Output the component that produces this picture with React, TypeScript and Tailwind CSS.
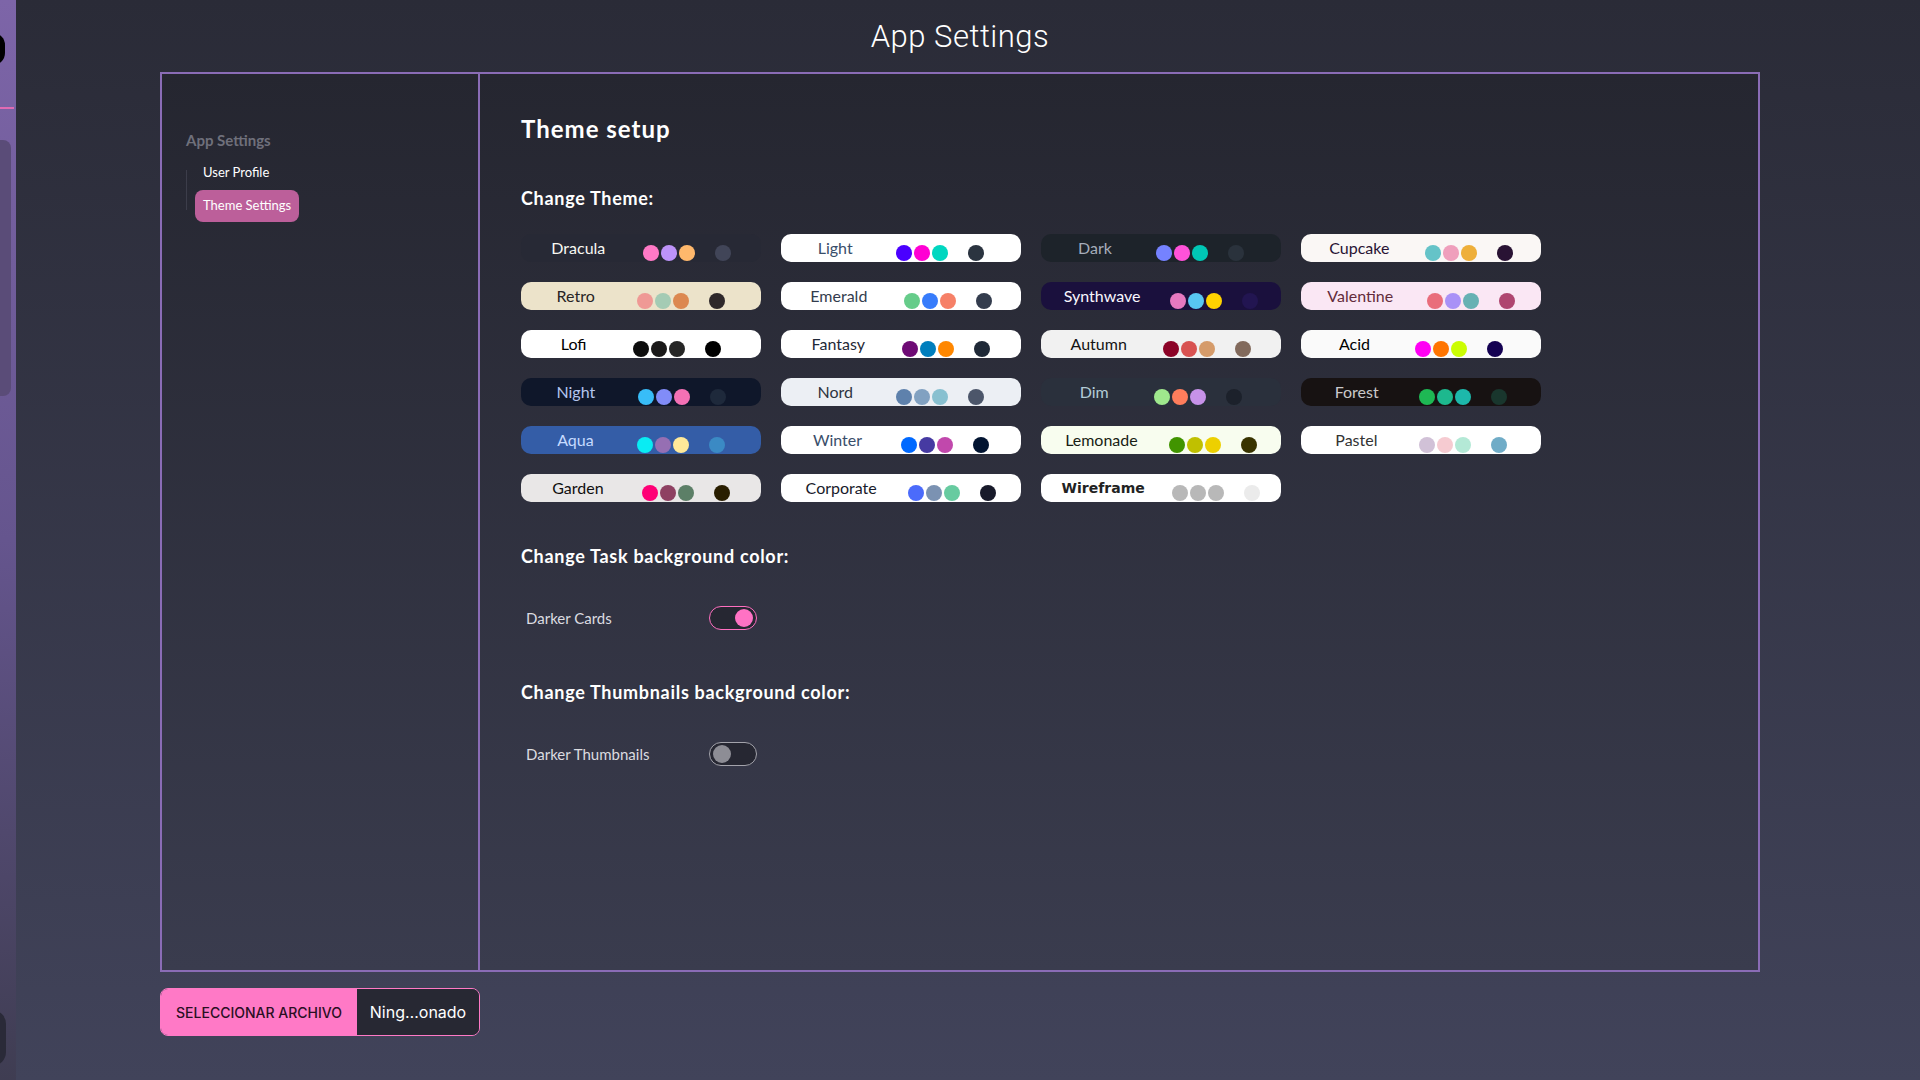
import React from 'react';

type Theme = {
  name: string;
  bg: string;
  text: string;
  dots: [string, string, string];
  neutral: string;
  font?: string;
};

const themes: Theme[] = [
  { name: 'Dracula', bg: 'bg-[#272935]', text: 'text-[#f8f8f2]', dots: ['bg-[#ff79c6]', 'bg-[#bd93f9]', 'bg-[#ffb86c]'], neutral: 'bg-[#414558]' },
  { name: 'Light', bg: 'bg-white', text: 'text-[#394e6a]', dots: ['bg-[#4a00ff]', 'bg-[#ff00d3]', 'bg-[#00d7c0]'], neutral: 'bg-[#2b3440]' },
  { name: 'Dark', bg: 'bg-[#1d232a]', text: 'text-[#a6adba]', dots: ['bg-[#7582ff]', 'bg-[#ff52d9]', 'bg-[#00c7b5]'], neutral: 'bg-[#2a323c]' },
  { name: 'Cupcake', bg: 'bg-[#faf7f5]', text: 'text-[#291334]', dots: ['bg-[#65c3c8]', 'bg-[#ef9fbc]', 'bg-[#eeaf3a]'], neutral: 'bg-[#291334]' },

  { name: 'Retro', bg: 'bg-[#ece3ca]', text: 'text-[#282425]', dots: ['bg-[#ef9995]', 'bg-[#a4cbb4]', 'bg-[#dc8850]'], neutral: 'bg-[#2e282a]' },
  { name: 'Emerald', bg: 'bg-white', text: 'text-[#333c4d]', dots: ['bg-[#66cc8a]', 'bg-[#377cfb]', 'bg-[#f68067]'], neutral: 'bg-[#333c4d]' },
  { name: 'Synthwave', bg: 'bg-[#1a103d]', text: 'text-[#f9f7fd]', dots: ['bg-[#e779c1]', 'bg-[#58c7f3]', 'bg-[#ffd200]'], neutral: 'bg-[#221551]' },
  { name: 'Valentine', bg: 'bg-[#fae7f4]', text: 'text-[#632c3b]', dots: ['bg-[#e96d7b]', 'bg-[#a991f7]', 'bg-[#66b1b3]'], neutral: 'bg-[#af4670]' },

  { name: 'Lofi', bg: 'bg-white', text: 'text-[#000000]', dots: ['bg-[#0d0d0d]', 'bg-[#1a1919]', 'bg-[#262626]'], neutral: 'bg-[#000000]' },
  { name: 'Fantasy', bg: 'bg-white', text: 'text-[#1f2937]', dots: ['bg-[#6e0b75]', 'bg-[#007ebd]', 'bg-[#ff8700]'], neutral: 'bg-[#1f2937]' },
  { name: 'Autumn', bg: 'bg-[#f1f1f1]', text: 'text-[#141414]', dots: ['bg-[#8c0327]', 'bg-[#d85251]', 'bg-[#d59b6a]'], neutral: 'bg-[#826a5c]' },
  { name: 'Acid', bg: 'bg-[#fafafa]', text: 'text-[#000000]', dots: ['bg-[#ff00f4]', 'bg-[#ff7400]', 'bg-[#cbfd03]'], neutral: 'bg-[#140152]' },

  { name: 'Night', bg: 'bg-[#0f172a]', text: 'text-[#b3c5ef]', dots: ['bg-[#38bdf8]', 'bg-[#818cf8]', 'bg-[#f471b5]'], neutral: 'bg-[#1e293b]' },
  { name: 'Nord', bg: 'bg-[#eceff4]', text: 'text-[#2e3440]', dots: ['bg-[#5e81ac]', 'bg-[#81a1c1]', 'bg-[#88c0d0]'], neutral: 'bg-[#4c566a]' },
  { name: 'Dim', bg: 'bg-[#2a303c]', text: 'text-[#b2ccd6]', dots: ['bg-[#9fe88d]', 'bg-[#ff7d5c]', 'bg-[#c792e9]'], neutral: 'bg-[#1c212b]' },
  { name: 'Forest', bg: 'bg-[#171212]', text: 'text-[#cac9c9]', dots: ['bg-[#1eb854]', 'bg-[#1db88e]', 'bg-[#1db8ab]'], neutral: 'bg-[#19362d]' },

  { name: 'Aqua', bg: 'bg-[#345da7]', text: 'text-[#c6dbff]', dots: ['bg-[#09ecf3]', 'bg-[#966fb3]', 'bg-[#ffe999]'], neutral: 'bg-[#3b8ac4]' },
  { name: 'Winter', bg: 'bg-white', text: 'text-[#394e6a]', dots: ['bg-[#0069ff]', 'bg-[#463aa2]', 'bg-[#c148ac]'], neutral: 'bg-[#021431]' },
  { name: 'Lemonade', bg: 'bg-[#f8fdef]', text: 'text-[#191e15]', dots: ['bg-[#419400]', 'bg-[#c0c000]', 'bg-[#edd000]'], neutral: 'bg-[#393400]' },
  { name: 'Pastel', bg: 'bg-white', text: 'text-[#333333]', dots: ['bg-[#d1c1d7]', 'bg-[#f6cbd1]', 'bg-[#b4e9d6]'], neutral: 'bg-[#70acc7]' },

  { name: 'Garden', bg: 'bg-[#e9e7e7]', text: 'text-[#100f0f]', dots: ['bg-[#ff0076]', 'bg-[#8e4162]', 'bg-[#5c7f67]'], neutral: 'bg-[#291e00]' },
  { name: 'Corporate', bg: 'bg-white', text: 'text-[#181a2a]', dots: ['bg-[#4b6bfb]', 'bg-[#7b92b2]', 'bg-[#67cba0]'], neutral: 'bg-[#181a2a]' },
  { name: 'Wireframe', bg: 'bg-white', text: 'text-[#222222]', dots: ['bg-[#b8b8b8]', 'bg-[#b8b8b8]', 'bg-[#b8b8b8]'], neutral: 'bg-[#ebebeb]', font: "font-['Comic_Sans_MS','DejaVu_Sans',cursive] font-semibold text-[14px]" },
];

function ThemeButton({ theme }: { theme: Theme }) {
  return (
    <button
      className={`flex h-7 w-[240px] items-center justify-evenly rounded-[10px] ${theme.bg} ${theme.text}`}
    >
      <span className={`-mt-px pr-[7px] leading-7 ${theme.font ?? 'text-[16px]'}`}>{theme.name}</span>
      <span className="mt-[10px] flex items-center gap-5">
        <span className="flex gap-0.5">
          {theme.dots.map((d, i) => (
            <span key={i} className={`h-4 w-4 rounded-full ${d}`} />
          ))}
        </span>
        <span className={`h-4 w-4 rounded-full ${theme.neutral}`} />
      </span>
    </button>
  );
}

function Toggle({ on }: { on: boolean }) {
  return (
    <div
      className={`flex h-6 w-12 items-center rounded-full border px-[3px] ${
        on ? 'justify-end border-[#ff6fc0] bg-[#262732]' : 'justify-start border-[#a3a3ab] bg-[#262732]'
      }`}
    >
      <span className={`h-[18px] w-[18px] rounded-full ${on ? 'bg-[#ff72c4]' : 'bg-[#8d8d95]'}`} />
    </div>
  );
}

export default function App() {
  return (
    <div className="flex min-h-screen w-full bg-gradient-to-b from-[#2a2b37] to-[#41435a] font-['Lato','Noto_Sans',sans-serif] text-white">
      {/* collapsed drawer strip */}
      <div className="relative h-[1080px] w-4 shrink-0 overflow-hidden bg-gradient-to-b from-[#7d65a8] via-[#65558e] to-[#3f3d52]">
        <div className="absolute -left-[19px] top-[33px] h-8 w-6 rounded-full bg-black" />
        <div className="mt-[107px] h-[2px] w-[14px] bg-[#e06bb3]" />
        <div className="mt-[31px] h-[256px] w-[11px] rounded-r-lg bg-[#5a4c78]" />
        <div className="absolute -left-[22px] top-[1010px] h-14 w-7 rounded-full bg-[#2a2a38]" />
      </div>

      <div className="flex flex-col pl-[144px]">
        <h1 className="w-[1600px] pt-[19px] text-center font-['Roboto',sans-serif] text-[31px] font-light leading-9 tracking-[0.5px] text-white">
          App Settings
        </h1>

        <div className="mt-[17px] flex h-[900px] w-[1600px] border-2 border-[#8a6cb6] bg-gradient-to-b from-[#252630] to-[#3a3c4e]">
          {/* sidebar */}
          <aside className="w-[318px] shrink-0 border-r-2 border-[#8a6cb6] pl-6 pt-[56px]">
            <div className="text-[15px] font-bold leading-5 text-[#6f707b]">App Settings</div>
            <div className="mt-[7px] flex">
              <div className="mt-[13px] h-10 w-px bg-[#3c3d4a]" />
              <ul className="flex flex-col gap-px">
                <li className="ml-2 flex h-8 items-center px-2 text-[13px] text-white">User Profile</li>
                <li className="ml-2 flex h-8 items-center rounded-lg bg-[#bc5f9a] px-2 text-[13px] text-white">
                  Theme Settings
                </li>
              </ul>
            </div>
          </aside>

          {/* content */}
          <section className="flex-1 pl-[41px] pt-[41px]">
            <h2 className="text-[24px] font-bold leading-7 tracking-[1px] text-white">Theme setup</h2>

            <h3 className="mt-[43px] text-[18px] font-bold leading-6 tracking-[0.7px] text-white">Change Theme:</h3>
            <div className="mt-6 grid w-[1020px] grid-cols-4 gap-x-5 gap-y-5">
              {themes.map((t) => (
                <ThemeButton key={t.name} theme={t} />
              ))}
            </div>

            <h3 className="mt-[42px] text-[18px] font-bold leading-6 tracking-[0.7px] text-white">
              Change Task background color:
            </h3>
            <div className="mt-[38px] flex items-center pl-[5px]">
              <span className="w-[183px] text-[15px] text-[#dcdce0]">Darker Cards</span>
              <Toggle on />
            </div>

            <h3 className="mt-[50px] text-[18px] font-bold leading-6 tracking-[0.7px] text-white">
              Change Thumbnails background color:
            </h3>
            <div className="mt-[38px] flex items-center pl-[5px]">
              <span className="w-[183px] text-[15px] text-[#dcdce0]">Darker Thumbnails</span>
              <Toggle on={false} />
            </div>
          </section>
        </div>

        {/* file input */}
        <div className="mt-4 flex h-12 w-[320px] overflow-hidden rounded-lg border border-[#ff79c6]">
          <div className="flex w-[196px] items-center justify-center bg-[#ff79c6] font-['Inter',sans-serif] text-[14px] font-medium text-[#2b0f23]">
            SELECCIONAR ARCHIVO
          </div>
          <div className="flex flex-1 items-center justify-center bg-[#272833] font-['Inter',sans-serif] text-[16px] text-white">
            Ning…onado
          </div>
        </div>
      </div>
    </div>
  );
}
